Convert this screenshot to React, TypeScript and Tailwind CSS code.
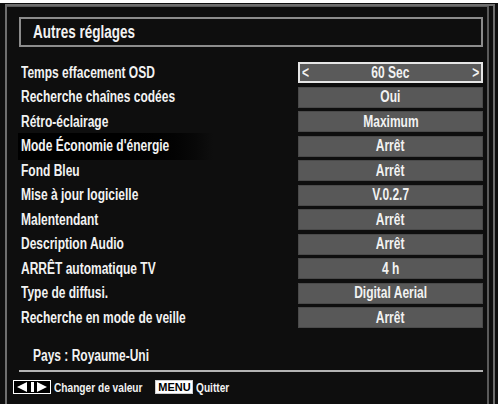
const rows: [string, string][] = [
  ['Temps effacement OSD', '60 Sec'],
  ['Recherche chaînes codées', 'Oui'],
  ['Rétro-éclairage', 'Maximum'],
  ["Mode Économie d'énergie", 'Arrêt'],
  ['Fond Bleu', 'Arrêt'],
  ['Mise à jour logicielle', 'V.0.2.7'],
  ['Malentendant', 'Arrêt'],
  ['Description Audio', 'Arrêt'],
  ['ARRÊT automatique TV', '4 h'],
  ['Type de diffusi.', 'Digital Aerial'],
  ['Recherche en mode de veille', 'Arrêt'],
]

// condensed look: Liberation Sans squeezed horizontally
const narrow = 'inline-block whitespace-nowrap leading-none scale-x-[0.75]'

export default function App() {
  return (
    <div className="flex h-[404px] w-[498px] flex-col bg-white pt-[3px] font-['Liberation_Sans',Arial,sans-serif] font-bold text-[#f2f2f2]">
      <div className="flex flex-1 flex-col bg-[#0e0e0e] pl-[5px] pr-[3px] pt-px">
        {/* outer frame */}
        <div className="flex flex-1 flex-col border-2 border-b-0 border-[#6e6e6e]">
          <div className="mr-[4px] flex flex-1 flex-col border-r-2 border-t border-[#5a5a5a] pl-[12px] pr-[4px] pt-[10px]">
            {/* Title */}
            <div className="flex h-[30px] items-center border-2 border-[#8c8c8c] pl-[12px]">
              <span className={`${narrow} origin-left text-[18px]`}>Autres réglages</span>
            </div>

            {/* Settings */}
            <div className="mt-[15px] flex flex-col gap-[3.5px] pl-[2px]">
              {rows.map(([label, value], i) => (
                <div key={label} className="flex h-[21px] items-center justify-between">
                  <div
                    className={
                      i === 3
                        ? '-my-[3px] -ml-[3px] flex h-[27px] w-[195px] items-center bg-gradient-to-r from-black via-black to-[#0e0e0e] pl-[3px]'
                        : 'flex h-[21px] items-center'
                    }
                  >
                    <span className={`${narrow} origin-left text-[16px]`}>{label}</span>
                  </div>
                  {i === 0 ? (
                    <div className="flex h-[21px] w-[185px] items-center justify-between border-2 border-[#e6e6e6] bg-[#5a5a5a] px-[2px]">
                      <span className={`${narrow} origin-left text-[16px]`}>&lt;</span>
                      <span className={`${narrow} text-[16px]`}>{value}</span>
                      <span className={`${narrow} origin-right text-[16px]`}>&gt;</span>
                    </div>
                  ) : (
                    <div className="flex h-[21px] w-[185px] items-center justify-center border border-[#4a4a4a] bg-[#585858]">
                      <span className={`${narrow} text-[16px]`}>{value}</span>
                    </div>
                  )}
                </div>
              ))}
            </div>

            {/* Country */}
            <div className="mt-[21px] flex h-[14px] items-center pl-[14px]">
              <span className={`${narrow} origin-left text-[16px] scale-x-[0.72]`}>Pays : Royaume-Uni</span>
            </div>
            <div className="mt-[7px] h-[2px] bg-[#b4b4b4]" />

            {/* Legend */}
            <div className="-ml-[6px] mt-[8px] flex h-[14px] items-center">
              <div className="flex h-[14px] w-[38px] items-center justify-between border border-white bg-black px-[2px]">
                <svg width="12" height="10" viewBox="0 0 12 10">
                  <polygon points="11,0 11,10 1,5" fill="#fff" />
                </svg>
                <div className="h-[10px] w-[3px] bg-white" />
                <svg width="12" height="10" viewBox="0 0 12 10">
                  <polygon points="1,0 1,10 11,5" fill="#fff" />
                </svg>
              </div>
              <span className={`${narrow} ml-[3px] origin-left text-[13px] scale-x-[0.78]`}>Changer de valeur</span>
              <div className="-ml-[12px] flex h-[14px] w-[38px] items-center justify-center border border-[#cfcfcf] bg-white">
                <span className="text-[11px] leading-none text-black">MENU</span>
              </div>
              <span className={`${narrow} ml-[3px] origin-left text-[13px] scale-x-[0.78]`}>Quitter</span>
            </div>
          </div>
        </div>
      </div>
    </div>
  )
}
